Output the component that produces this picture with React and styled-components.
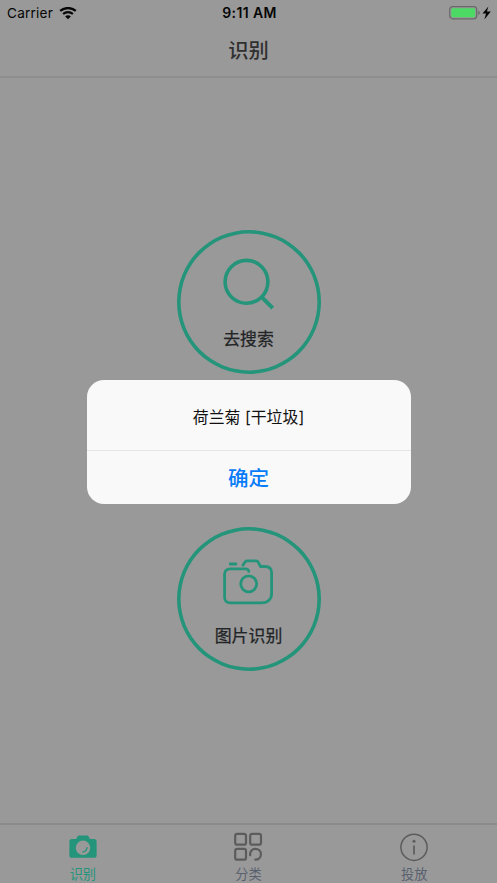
import React from 'react';
import styled, { createGlobalStyle } from 'styled-components';

const GREEN = '#24957a';

const Global = createGlobalStyle`
  * { box-sizing: border-box; }
  body { margin: 0; background: #999; overflow: hidden; }
`;

const Screen = styled.div`
  position: relative;
  width: 497px;
  height: 883px;
  display: flex;
  flex-direction: column;
  background: #999;
  font-family: Inter, "Noto Sans CJK SC", sans-serif;
  color: #222426;
`;

const StatusBar = styled.div`
  height: 26px;
  display: grid;
  grid-template-columns: 1fr auto 1fr;
  align-items: center;
  padding: 0 5px 0 7px;
  color: #060606;
  font-size: 13.6px;
  line-height: 26px;
`;

const Carrier = styled.div`
  display: flex;
  align-items: center;
  gap: 6px;
  letter-spacing: 0.2px;
`;

const Time = styled.div`
  font-size: 14px;
  font-weight: 600;
  letter-spacing: 0.4px;
`;

const Battery = styled.div`
  display: flex;
  align-items: center;
  justify-content: flex-end;
  height: 24px;
`;

const NavBar = styled.header`
  height: 52px;
  border-bottom: 2px solid #8e8e8e;
  display: flex;
  justify-content: center;
  font-size: 20.3px;
  line-height: 50px;
  font-weight: 500;
  color: #303030;
`;

const Main = styled.main`
  flex: 1;
  display: flex;
  flex-direction: column;
  align-items: center;
  gap: 153px;
  padding-top: 152px;
`;

const RoundButton = styled.button`
  width: 144px;
  height: 144px;
  flex: none;
  border: 0;
  box-shadow: inset 0 0 0 3.6px ${GREEN};
  border-radius: 50%;
  background: none;
  padding: 24px 0 0;
  display: flex;
  flex-direction: column;
  align-items: center;
  font: 400 16.9px/24px Inter, "Noto Sans CJK SC", sans-serif;
  -webkit-text-stroke: 0.25px #222426;
  color: #222426;
`;

const ButtonLabel = styled.span`
  margin-top: 13px;
`;

const TabBar = styled.nav`
  height: 60px;
  border-top: 2px solid #8b8b8b;
  display: grid;
  grid-template-columns: repeat(3, 1fr);
`;

const Tab = styled.div`
  display: flex;
  flex-direction: column;
  align-items: center;
  padding-top: 7px;
  font-size: 13.2px;
  line-height: 18px;
  color: ${(p) => (p.$active ? GREEN : '#596170')};
  svg { margin-bottom: 3px; }
`;

const Overlay = styled.div`
  position: absolute;
  inset: 0;
  display: flex;
  justify-content: center;
  align-items: center;
`;

const Dialog = styled.div`
  width: 324px;
  height: 124px;
  border-radius: 17px;
  overflow: hidden;
  background: #f9f9f9;
  display: flex;
  flex-direction: column;
`;

const Message = styled.div`
  flex: 1;
  display: flex;
  align-items: center;
  justify-content: center;
  padding-top: 4px;
  font-size: 15.9px;
  color: #111;
`;

const Confirm = styled.button`
  height: 54px;
  border: 0;
  border-top: 1px solid #e5e5e5;
  background: none;
  padding: 2px 0 0;
  font: 500 20.5px/51px Inter, "Noto Sans CJK SC", sans-serif;
  color: #087cf8;
`;

const WifiIcon = () => (
  <svg width="18" height="13" viewBox="0 0 18 13" fill="none" stroke="#060606" strokeWidth="2.3">
    <path d="M1.2 3.9C5.6.1 12.4.1 16.8 3.9M4.1 7c2.8-2.4 7-2.4 9.8 0" />
    <path d="M9 12.2 6.2 9.4c1.5-1.4 4.1-1.4 5.6 0Z" fill="#060606" stroke="none" />
  </svg>
);

const BatteryIcon = () => (
  <svg width="44" height="16" viewBox="0 0 44 16">
    <rect x="1.7" y="1.6" width="27" height="12.2" rx="3" fill="none" stroke="#686868" strokeWidth="1.2" />
    <rect x="3.3" y="3.2" width="23.8" height="9" rx="1.5" fill="#4cd964" />
    <path d="M30.3 5.7c2 .6 2 3.6 0 4.2Z" fill="#686868" />
    <path d="m40.4 1.4-5.9 7.2h3.5l-1.6 6 6.4-8h-3.9Z" fill="#060606" />
  </svg>
);

const SearchIcon = () => (
  <svg width="60" height="60" viewBox="0 0 60 60" fill="none" stroke={GREEN} strokeWidth="3.6">
    <circle cx="27.5" cy="27.8" r="21.4" />
    <path d="m42.3 42.6 11.4 11.5" strokeWidth="4" />
  </svg>
);

const CameraIcon = () => (
  <svg width="60" height="60" viewBox="0 0 60 60" fill="none" stroke={GREEN} strokeWidth="2.8" strokeLinecap="round" strokeLinejoin="round">
    <g transform="translate(-.8 .2)">
      <path d="M12 12.8h5.8M30.6 20.2V20c-.4-1.5-1.6-2.3-3.2-2.3H12c-3.3 0-5.6 2-5.6 5.2v23.4c0 3.3 2.3 5.3 5.6 5.3h31.4c6.2 0 10-3.4 10-9.6V21.5c0-4.2-2.4-6.2-6.7-6.2h-4.4l-2.2-4.2c-.5-1-1-1.4-2.2-1.4H28.8c-1 0-1.6.5-2.1 1.3l-2 3" />
      <circle cx="30.5" cy="32.6" r="8" />
    </g>
  </svg>
);

const TabCameraIcon = () => (
  <svg width="32" height="30" viewBox="0 0 32 30">
    <path d="M4.8 6.9h4.3l1.5-2.6c.3-.5.8-.8 1.4-.8h8c.6 0 1.1.3 1.4.8l1.5 2.6h4.3c1.5 0 2.4.9 2.4 2.4v14.1c0 1.5-.9 2.4-2.4 2.4H4.8c-1.5 0-2.4-.9-2.4-2.4V9.3c0-1.5.9-2.4 2.4-2.4Z" fill={GREEN} />
    <circle cx="16" cy="15.8" r="7.2" fill="#999" />
    <path d="M20 15.7c-.2 2.3-1.7 3.8-4 4.2" fill="none" stroke={GREEN} strokeWidth="1.4" strokeLinecap="round" />
  </svg>
);

const GridIcon = () => (
  <svg width="32" height="30" viewBox="0 0 32 30" fill="none" stroke="#5c5c5c" strokeWidth="2.2" strokeLinecap="round">
    <rect x="3.2" y="1.9" width="10.8" height="10.8" rx="2" />
    <rect x="18.2" y="1.9" width="10.8" height="10.8" rx="2" />
    <rect x="3.2" y="16.9" width="10.8" height="10.8" rx="2" />
    <path d="M18.2 23.2c-.6-3.5 1.8-6.3 5.1-6.3 3.2 0 5.6 2.2 5.6 5.3 0 3.2-2.4 5.5-5.6 5.5" />
  </svg>
);

const InfoIcon = () => (
  <svg width="32" height="30" viewBox="0 0 32 30" fill="none" stroke="#5c5c5c">
    <circle cx="16" cy="15.3" r="13.1" strokeWidth="1.5" />
    <path d="M16 13.5v9" strokeWidth="1.7" />
    <circle cx="16" cy="9.3" r="1.5" fill="#5c5c5c" stroke="none" />
  </svg>
);

export default function App() {
  return (
    <>
      <Global />
      <Screen>
        <StatusBar>
          <Carrier>Carrier <WifiIcon /></Carrier>
          <Time>9:11 AM</Time>
          <Battery><BatteryIcon /></Battery>
        </StatusBar>
        <NavBar>识别</NavBar>
        <Main>
          <RoundButton><SearchIcon /><ButtonLabel>去搜索</ButtonLabel></RoundButton>
          <RoundButton><CameraIcon /><ButtonLabel>图片识别</ButtonLabel></RoundButton>
        </Main>
        <TabBar>
          <Tab $active><TabCameraIcon />识别</Tab>
          <Tab><GridIcon />分类</Tab>
          <Tab><InfoIcon />投放</Tab>
        </TabBar>
        <Overlay>
          <Dialog>
            <Message>荷兰菊 [干垃圾]</Message>
            <Confirm>确定</Confirm>
          </Dialog>
        </Overlay>
      </Screen>
    </>
  );
}
